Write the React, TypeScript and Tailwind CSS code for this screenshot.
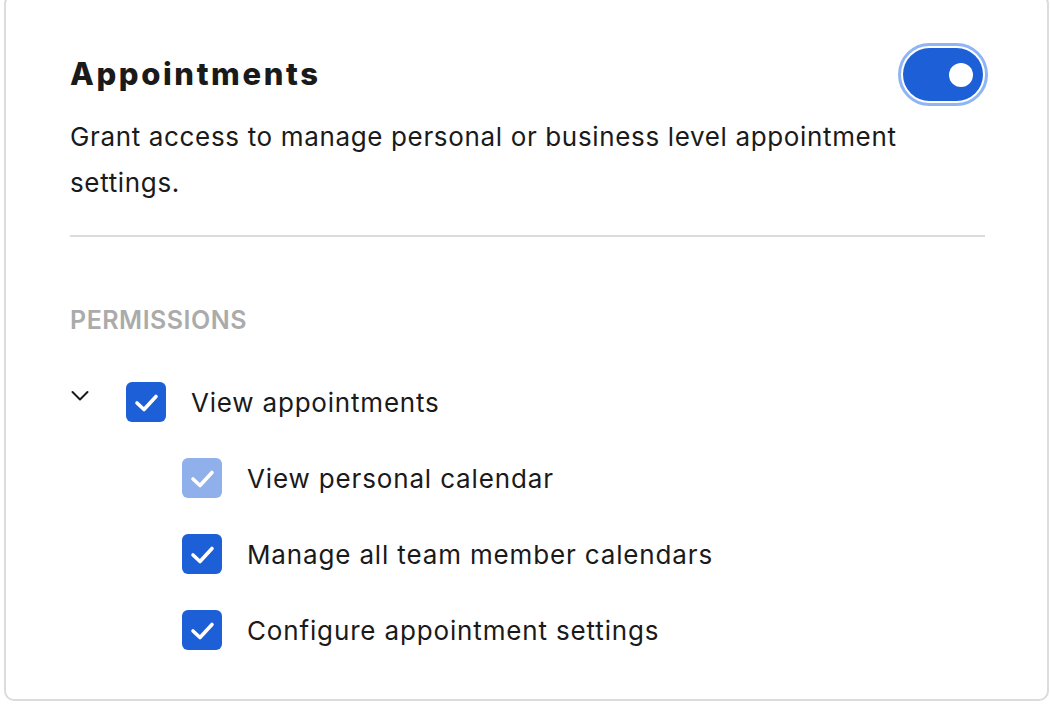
import { useState } from 'react';

const BLUE = 'bg-[#1c5fd7]';

function Check({ light }: { light?: boolean }) {
  return (
    <span
      className={`w-[40px] h-[40px] rounded-[6px] flex items-center justify-center shrink-0 ${light ? 'bg-[#8fb0ea]' : BLUE}`}
    >
      <svg width="40" height="40" viewBox="0 0 40 40" fill="none">
        <path d="M11 21l7 6.5 12-13" stroke="white" strokeWidth="3.6" strokeLinecap="round" strokeLinejoin="round" />
      </svg>
    </span>
  );
}

export default function App() {
  const [enabled, setEnabled] = useState(true);

  const children = [
    { label: 'View personal calendar', light: true },
    { label: 'Manage all team member calendars', light: false },
    { label: 'Configure appointment settings', light: false },
  ];

  return (
    <div className="w-[1050px] h-[710px] bg-white overflow-hidden pl-[4px]" style={{ fontFamily: 'Inter, "Open Sans", sans-serif' }}>
      <div className="-mt-[6px] w-[1045px] h-[707px] border-2 border-[#dcdcdc] rounded-[10px] pl-[64px] pr-[62px] pt-[50px] text-[#1a1a1a]">
        <div className="flex items-start justify-between">
          <h1 className="text-[31px] leading-[44px] font-extrabold tracking-[2.6px] mt-[6px]">Appointments</h1>
          <button
            onClick={() => setEnabled(!enabled)}
            className="w-[90px] h-[63px] rounded-full border-[3px] border-[#8fb5f5] p-[2px] -mr-[3px] -mt-[3px]"
          >
            <span className={`w-full h-full rounded-full flex items-center px-[10px] ${enabled ? `${BLUE} justify-end` : 'bg-gray-300 justify-start'}`}>
              <span className="w-[24px] h-[24px] rounded-full bg-white" />
            </span>
          </button>
        </div>
        <p className="text-[26px] leading-[46px] tracking-[0.65px] mt-[8px] w-[870px]">
          Grant access to manage personal or business level appointment settings.
        </p>
        <div className="h-[2px] bg-[#dcdcdc] mt-[29px]" />
        <div className="mt-[69px] text-[25px] leading-[28px] font-semibold tracking-[0.5px] text-[#ababab]">PERMISSIONS</div>
        <div className="mt-[48px] flex items-center h-[40px]">
          <svg width="20" height="20" viewBox="0 0 20 20" fill="none" className="-mt-[12px]">
            <path d="M2.5 6l7.5 7.5 7.5-7.5" stroke="#1a1a1a" strokeWidth="2" strokeLinecap="round" strokeLinejoin="round" />
          </svg>
          <span className="ml-[36px]"><Check /></span>
          <span className="ml-[25px] text-[26px] tracking-[0.8px]">View appointments</span>
        </div>
        <div className="pl-[112px]">
          {children.map((c) => (
            <div key={c.label} className="flex items-center h-[40px] mt-[36px]">
              <Check light={c.light} />
              <span className="ml-[25px] text-[26px] tracking-[0.85px]">{c.label}</span>
            </div>
          ))}
        </div>
      </div>
    </div>
  );
}
